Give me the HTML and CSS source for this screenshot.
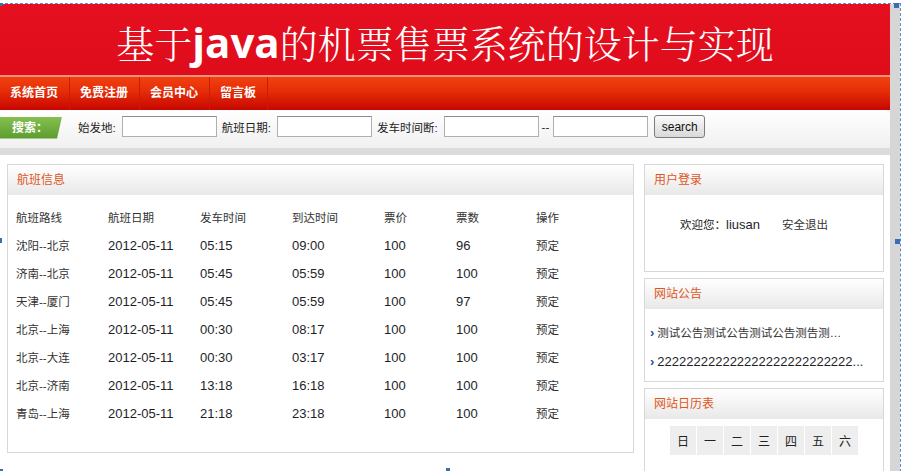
FILE: index.html
```html
<!DOCTYPE html>
<html lang="zh-CN">
<head>
  <meta charset="UTF-8">
  <meta name="viewport" content="width=device-width, initial-scale=1.0">
  <title>基于java的机票售票系统</title>
  <link rel="stylesheet" href="styles.css">
</head>
<body>
  <div class="canvas">
    <div class="page">
      <div class="banner">
        <h1>基于<b>java</b>的机票售票系统的设计与实现</h1>
      </div>

      <ul class="nav">
        <li><a href="#">系统首页</a></li>
        <li><a href="#">免费注册</a></li>
        <li><a href="#">会员中心</a></li>
        <li><a href="#">留言板</a></li>
      </ul>

      <form class="search">
        <span class="search-tag">搜索：</span>
        <label class="first">始发地:</label><input type="text">
        <label>航班日期:</label><input type="text">
        <label>发车时间断:</label><input type="text">
        <span class="dash">--</span><input type="text" class="to">
        <button type="button">search</button>
      </form>
      <div class="divider"></div>

      <div class="main">
        <div class="box flights">
          <div class="box-title">航班信息</div>
          <table class="flight-table">
            <tr><td>航班路线</td><td>航班日期</td><td>发车时间</td><td>到达时间</td><td>票价</td><td>票数</td><td>操作</td></tr>
            <tr><td>沈阳--北京</td><td class="n">2012-05-11</td><td class="n">05:15</td><td class="n">09:00</td><td class="n">100</td><td class="n">96</td><td><a href="#">预定</a></td></tr>
            <tr><td>济南--北京</td><td class="n">2012-05-11</td><td class="n">05:45</td><td class="n">05:59</td><td class="n">100</td><td class="n">100</td><td><a href="#">预定</a></td></tr>
            <tr><td>天津--厦门</td><td class="n">2012-05-11</td><td class="n">05:45</td><td class="n">05:59</td><td class="n">100</td><td class="n">97</td><td><a href="#">预定</a></td></tr>
            <tr><td>北京--上海</td><td class="n">2012-05-11</td><td class="n">00:30</td><td class="n">08:17</td><td class="n">100</td><td class="n">100</td><td><a href="#">预定</a></td></tr>
            <tr><td>北京--大连</td><td class="n">2012-05-11</td><td class="n">00:30</td><td class="n">03:17</td><td class="n">100</td><td class="n">100</td><td><a href="#">预定</a></td></tr>
            <tr><td>北京--济南</td><td class="n">2012-05-11</td><td class="n">13:18</td><td class="n">16:18</td><td class="n">100</td><td class="n">100</td><td><a href="#">预定</a></td></tr>
            <tr><td>青岛--上海</td><td class="n">2012-05-11</td><td class="n">21:18</td><td class="n">23:18</td><td class="n">100</td><td class="n">100</td><td><a href="#">预定</a></td></tr>
          </table>
        </div>

        <div class="side">
          <div class="box login">
            <div class="box-title">用户登录</div>
            <div class="login-body">
              欢迎您：<span class="n">liusan</span><a href="#" class="logout">安全退出</a>
            </div>
          </div>

          <div class="box notice">
            <div class="box-title">网站公告</div>
            <ul class="notice-list">
              <li><a href="#">测试公告测试公告测试公告测告测…</a></li>
              <li><a href="#" class="n">222222222222222222222222222...</a></li>
            </ul>
          </div>

          <div class="box calendar">
            <div class="box-title">网站日历表</div>
            <table class="cal">
              <tr><th>日</th><th>一</th><th>二</th><th>三</th><th>四</th><th>五</th><th>六</th></tr>
            </table>
          </div>
        </div>
      </div>
    </div>
    <div class="gutter"></div>

    <span class="handle h-tl"></span>
    <span class="handle h-tr"></span>
    <span class="handle h-ml"></span>
    <span class="handle h-mr"></span>
    <span class="handle h-bl"></span>
    <span class="handle h-bm"></span>
  </div>
</body>
</html>
```

FILE: styles.css
```css
body {
  margin: 0;
  padding-top: 3px;
  font-family: "Liberation Sans", "Noto Sans CJK SC", sans-serif;
  font-size: 11.5px;
  color: #333;
  background: #fff;
  overflow: hidden;
}
a {
  color: #333;
  text-decoration: none;
}
.n {
  font-size: 13px;
  color: #1e1e28;
}
.canvas {
  position: relative;
  display: flex;
  width: 900px;
  min-height: 480px;
  border-top: 1px dashed #5b8bd6;
  border-right: 1px dashed #5b8bd6;
}
.page {
  width: 890px;
}
.gutter {
  width: 10px;
  background: #d6d6d6;
}

/* header */
.banner {
  height: 71px;
  display: flex;
  align-items: center;
  justify-content: center;
  background: linear-gradient(#e5101f, #df0c1c);
}
.banner h1 {
  margin: 0;
  padding-top: 4px;
  font-family: "Noto Serif CJK SC", "Noto Sans CJK SC", serif;
  font-size: 38px;
  font-weight: 300;
  color: #fff;
  line-height: 1;
}
.banner h1 b {
  font-family: "Open Sans", sans-serif;
  font-size: 42px;
  font-weight: 700;
}
.nav {
  display: flex;
  margin: 0;
  padding: 0;
  list-style: none;
  height: 33px;
  border-top: 2px solid #f8907c;
  background: linear-gradient(#f1410f, #e52c07 45%, #c70600);
}
.nav li {
  padding: 0 11px 0 10px;
  border-right: 1px solid #cf1a02;
  line-height: 33px;
}
.nav a {
  color: #fff;
  font-size: 12px;
  font-weight: bold;
}

/* search */
.search {
  display: flex;
  align-items: center;
  height: 38px;
  padding-bottom: 5px;
  box-sizing: border-box;
  background: linear-gradient(#fff, #f0f0f0);
}
.search-tag {
  width: 62px;
  height: 22px;
  margin-top: 2px;
  line-height: 22px;
  padding-left: 12px;
  box-sizing: border-box;
  background: linear-gradient(#85c050, #5b9c2d);
  clip-path: polygon(0 0, 100% 0, 92% 100%, 0 100%);
  color: #fff;
  font-size: 12px;
  font-weight: bold;
}
.search label {
  margin-left: 5px;
  margin-right: 6px;
  color: #222;
}
.search label.first {
  margin-left: 16px;
}
.search input {
  width: 95px;
  height: 21px;
  box-sizing: border-box;
  padding: 0;
  border: 1px solid #b0b0b0;
  border-top-color: #8c8c8c;
  background: #fff;
}
.dash {
  margin-left: 3px;
  color: #222;
}
.search input.to {
  margin-left: 4px;
}
.search button {
  margin-left: 6px;
  width: 51px;
  height: 23px;
  padding: 0;
  border: 1px solid #7c7c7c;
  border-radius: 3px;
  background: linear-gradient(#fbfbfb, #d9d9d9);
  font-family: "Liberation Sans", sans-serif;
  font-size: 12px;
  color: #111;
}
.divider {
  height: 7px;
  background: #dcdcdc;
}

/* content */
.main {
  display: flex;
  gap: 10px;
  padding: 9px 0 0 7px;
}
.box {
  border: 1px solid #d8d8d8;
  background: #fff;
  box-sizing: border-box;
}
.box-title {
  height: 30px;
  line-height: 30px;
  padding-left: 9px;
  background: linear-gradient(#fff, #e8e8e8);
  color: #e0561c;
  font-size: 12px;
}
.flights {
  width: 627px;
  height: 289px;
}
.flight-table {
  margin: 8px 0 0 8px;
  border-collapse: collapse;
}
.flight-table td {
  height: 28px;
  padding: 0;
  vertical-align: middle;
}
.flight-table td:nth-child(1),
.flight-table td:nth-child(2),
.flight-table td:nth-child(3),
.flight-table td:nth-child(4) {
  width: 92px;
}
.flight-table td:nth-child(5) {
  width: 72px;
}
.flight-table td:nth-child(6) {
  width: 80px;
}

.side {
  display: flex;
  flex-direction: column;
  gap: 6px;
  width: 240px;
}
.login-body {
  height: 76px;
  padding-left: 35px;
  line-height: 60px;
  color: #222;
}
.logout {
  margin-left: 22px;
}
.notice-list {
  margin: 0;
  padding: 9px 0 5px;
  list-style: none;
}
.notice-list li {
  height: 29px;
  line-height: 29px;
  padding-left: 5px;
  white-space: nowrap;
  overflow: hidden;
}
.notice-list li::before {
  content: "›";
  margin-right: 3px;
  color: #1f4ea6;
  font-size: 13px;
  font-weight: bold;
}
.cal {
  margin: 6px auto 40px;
  border-spacing: 1px;
}
.cal th {
  width: 26px;
  height: 29px;
  padding: 0;
  background: #eee;
  font-size: 12px;
  font-weight: normal;
  color: #222;
}

/* editor selection handles */
.handle {
  position: absolute;
  background: #3a6db5;
}
.h-tl { left: 0; top: -1px; width: 3px; height: 3px; }
.h-tr { left: 894px; top: -1px; width: 5px; height: 5px; }
.h-ml { left: 0; top: 234px; width: 2px; height: 5px; }
.h-mr { left: 895px; top: 235px; width: 5px; height: 5px; }
.h-bl { left: 0; top: 465px; width: 3px; height: 2px; }
.h-bm { left: 446px; top: 464px; width: 4px; height: 3px; }
```
